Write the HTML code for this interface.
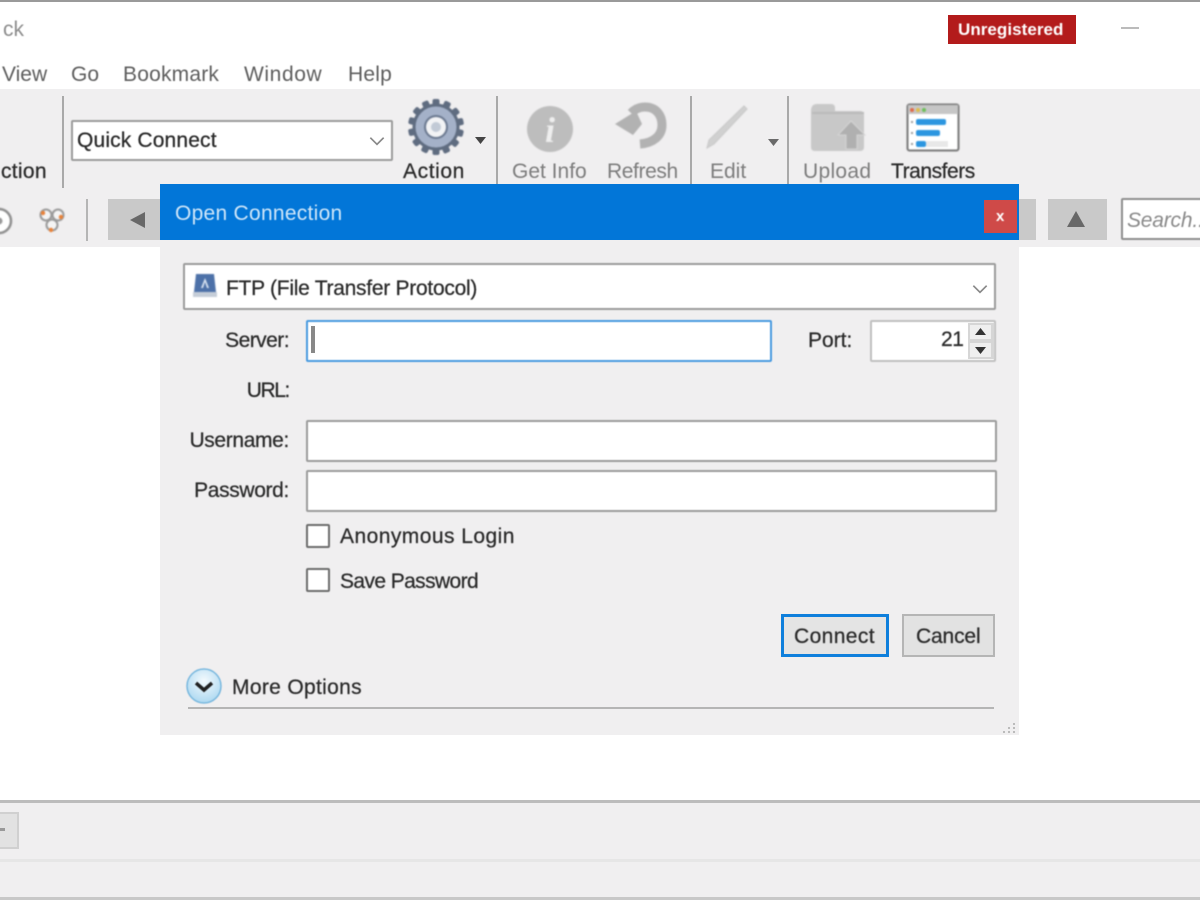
<!DOCTYPE html>
<html><head><meta charset="utf-8"><title>Open Connection</title>
<style>
html,body{margin:0;padding:0;background:#fff}
#r{position:relative;width:1200px;height:900px;overflow:hidden;background:#fff;font-family:"Liberation Sans",sans-serif;color:#3a3a3a}
#r div{position:absolute;box-sizing:border-box}
.t{white-space:nowrap;font-size:21px;line-height:26px;height:26px;margin-top:1px;filter:blur(.55px)}
.m{color:#5e5e5e}
.d{color:#7d7d7d}
.k{color:#2a2a2a;-webkit-text-stroke:.25px #2a2a2a}
.f{background:#fff;border:2px solid #9c9c9c;border-radius:2px;filter:blur(.4px)}
.s{width:2px;background:#a9a9a9}
.b{background:#c9c9c9}
svg{position:absolute;overflow:visible}
</style></head><body><div id="r">
<div style="left:0;top:0;width:1200px;height:2px;background:#9a9a9a"></div>
<div class="t d" style="left:3px;top:16px;color:#8d8d8d">ck</div>
<div style="left:948px;top:15px;width:128px;height:29px;background:#b31b1b"></div>
<div class="t" style="left:958px;top:16px;color:#fff;font-size:17px;font-weight:bold;letter-spacing:.05px">Unregistered</div>
<div style="left:1121px;top:27px;width:18px;height:2px;background:#bbb"></div>
<div class="t m" style="left:2px;top:61px;">View</div>
<div class="t m" style="left:71px;top:61px;">Go</div>
<div class="t m" style="left:123px;top:61px;letter-spacing:.2px">Bookmark</div>
<div class="t m" style="left:244px;top:61px;letter-spacing:.6px">Window</div>
<div class="t m" style="left:348px;top:61px;letter-spacing:.2px">Help</div>

<div style="left:0;top:89px;width:1200px;height:158px;background:#f0eff0"></div>
<div class="s" style="left:62px;top:96px;height:92px"></div>
<div class="s" style="left:496px;top:96px;height:88px"></div>
<div class="s" style="left:690px;top:96px;height:88px"></div>
<div class="s" style="left:787px;top:96px;height:88px"></div>
<div class="s" style="left:86px;top:199px;height:42px;background:#b5b5b5"></div>
<div class="t k" style="left:1px;top:158px;letter-spacing:.3px">ction</div>
<div class="f" style="left:71px;top:120px;width:322px;height:41px"></div>
<div class="t k" style="left:77px;top:127px;letter-spacing:.15px">Quick Connect</div>
<svg style="left:369px;top:136px" width="16" height="10" viewBox="0 0 18 12"><path d="M1 2l8 8 8-8" fill="none" stroke="#888" stroke-width="2"/></svg>
<svg style="left:406px;top:97px;filter:blur(.9px)" width="60" height="60" viewBox="0 0 60 60"><g fill="#5f6c80"><circle cx="30" cy="30" r="23.500"/><g id="tt"><rect x="26.500" y="2" width="7" height="8" rx="2"/><rect x="26.500" y="50" width="7" height="8" rx="2"/></g><use href="#tt" transform="rotate(26 30 30)"/><use href="#tt" transform="rotate(52 30 30)"/><use href="#tt" transform="rotate(78 30 30)"/><use href="#tt" transform="rotate(104 30 30)"/><use href="#tt" transform="rotate(130 30 30)"/><use href="#tt" transform="rotate(156 30 30)"/></g><circle cx="30" cy="30" r="20.500" fill="#a4b1c8"/><circle cx="30" cy="30" r="12" fill="#69778e"/><circle cx="30" cy="30" r="10" fill="#f2f3f5"/><circle cx="30" cy="30" r="5" fill="#c2cad6"/></svg>
<svg style="left:475px;top:137px" width="11" height="7" viewBox="0 0 11 7"><path d="M0 0h11L5.500 7z" fill="#444"/></svg>
<div class="t k" style="left:403px;top:158px;letter-spacing:.6px">Action</div>

<svg style="left:525px;top:104px;filter:blur(.8px)" width="50" height="50" viewBox="0 0 50 50"><circle cx="25" cy="25" r="23" fill="#bdbdbd"/><text x="25" y="38" text-anchor="middle" font-family="Liberation Serif" font-style="italic" font-weight="bold" font-size="36" fill="#eee">i</text></svg>
<div class="t d" style="left:512px;top:158px">Get Info</div>
<svg style="left:612px;top:100px;filter:blur(.9px)" width="58" height="52" viewBox="0 0 58 52"><path d="M19 13C23 9 27 7 33 7 44 7 50 15 50 25 50 36 41 43 28 44" fill="none" stroke="#b2b2b2" stroke-width="9"/><path d="M3 24L24 11 30 24 21 35z" fill="#b2b2b2"/></svg>
<div class="t d" style="left:607px;top:158px;letter-spacing:-.4px">Refresh</div>
<svg style="left:704px;top:104px;filter:blur(.9px)" width="48" height="48" viewBox="0 0 48 48"><path d="M3 44L5 36 40 2 43 5 10 40z" fill="#d0d0d0" stroke="#c8c8c8"/></svg>
<svg style="left:768px;top:139px" width="11" height="7" viewBox="0 0 11 7"><path d="M0 0h11L5.500 7z" fill="#6a6a6a"/></svg>
<div class="t d" style="left:710px;top:158px">Edit</div>
<svg style="left:808px;top:101px;filter:blur(.9px)" width="58" height="54" viewBox="0 0 58 54"><path d="M3 10q0-7 6-7h14q4 0 4 4v3h25q4 0 4 4v32q0 4-4 4H7q-4 0-4-4z" fill="#c8c8c8"/><path d="M4 12h52" stroke="#bbb" stroke-width="2"/><path d="M43 20L30 34h8v14h11V34h8z" fill="#b0b0b0" stroke="#d5d5d5"/></svg>
<div class="t d" style="left:803px;top:158px;letter-spacing:.3px">Upload</div>
<svg style="left:906px;top:103px;filter:blur(.7px)" width="54" height="50" viewBox="0 0 54 50"><rect x="1.500" y="1.500" width="51" height="46" rx="2" fill="#fff" stroke="#777" stroke-width="2"/><rect x="2" y="2" width="50" height="9" fill="#c6c6c6"/><circle cx="6" cy="7" r="2" fill="#e06a4a"/><circle cx="12" cy="7" r="2" fill="#e0bd4a"/><circle cx="18" cy="7" r="2" fill="#6dc05a"/><rect x="10" y="16" width="30" height="6" rx="2" fill="#2c96e0"/><rect x="10" y="27" width="24" height="6" rx="2" fill="#2c96e0"/><rect x="10" y="38" width="10" height="6" rx="2" fill="#2c96e0"/><path d="M5 19h2M5 30h2M5 41h2" stroke="#999" stroke-width="2"/><rect x="20" y="38" width="22" height="6" fill="#e8e8e8"/></svg>
<div class="t k" style="left:891px;top:158px;letter-spacing:-.45px">Transfers</div>

<svg style="left:-16px;top:206px;filter:blur(.7px)" width="30" height="30" viewBox="0 0 30 30"><circle cx="15" cy="15" r="12" fill="#fff" stroke="#8e8e8e" stroke-width="2.500"/><circle cx="15" cy="15" r="3.500" fill="#999"/></svg>
<svg style="left:37px;top:205px;filter:blur(.7px)" width="30" height="30" viewBox="0 0 30 30"><g fill="#f4f4f4" stroke="#999" stroke-width="2"><circle cx="9" cy="10" r="5.500"/><circle cx="21" cy="10" r="5.500"/><circle cx="15" cy="20" r="5.500"/></g><circle cx="6" cy="8" r="2.200" fill="#e8823a"/><circle cx="24" cy="12" r="2.200" fill="#e8823a"/><circle cx="14" cy="25" r="2.200" fill="#e8823a"/></svg>
<div class="b" style="left:108px;top:199px;width:55px;height:41px"></div>
<svg style="left:130px;top:212px" width="16" height="16" viewBox="0 0 16 16"><path d="M15 0v16L0 8z" fill="#686868"/></svg>
<div class="b" style="left:1015px;top:199px;width:21px;height:41px"></div>
<div class="b" style="left:1048px;top:199px;width:59px;height:41px"></div>
<svg style="left:1067px;top:211px" width="18" height="16" viewBox="0 0 18 16"><path d="M0 16h18L9 0z" fill="#686868"/></svg>
<div class="f" style="left:1121px;top:198px;width:90px;height:42px;border-color:#8f8f8f"></div>
<div class="t" style="left:1127px;top:207px;font-style:italic;color:#8a8a8a;letter-spacing:-.2px">Search...</div>

<div style="left:160px;top:240px;width:859px;height:495px;background:#f0eff0"></div>
<div style="left:160px;top:184px;width:859px;height:56px;background:#0276d8"></div>
<div class="t" style="left:175px;top:200px;color:#cfe6f9;letter-spacing:.27px">Open Connection</div>
<div style="left:984px;top:200px;width:33px;height:33px;background:#cf4a48"></div>
<div class="t" style="left:996px;top:203px;color:#fff;font-size:15px;font-weight:bold">x</div>

<div class="f" style="left:183px;top:263px;width:813px;height:47px"></div>
<svg style="left:192px;top:273px;filter:blur(.7px)" width="26" height="26" viewBox="0 0 26 26"><path d="M4 1h18l2 18H2z" fill="#4d71a8"/><rect x="1" y="19" width="24" height="5" fill="#c5cdd8"/><path d="M13 5l-4 10h2l2-6 2 6h2z" fill="#dce6f3"/></svg>
<div class="t k" style="left:226px;top:275px;letter-spacing:-.27px">FTP (File Transfer Protocol)</div>
<svg style="left:972px;top:284px" width="16" height="10" viewBox="0 0 18 12"><path d="M1 2l8 8 8-8" fill="none" stroke="#888" stroke-width="2"/></svg>

<div class="t k" style="right:911px;top:327px;letter-spacing:-.55px">Server:</div>
<div class="f" style="left:306px;top:320px;width:466px;height:42px;border-color:#4a9be0"></div>
<div style="left:311px;top:326px;width:4px;height:27px;background:#888"></div>
<div class="t k" style="left:808px;top:327px">Port:</div>
<div class="f" style="left:870px;top:320px;width:126px;height:42px;border-color:#c0c0c0"></div>
<div class="t k" style="left:941px;top:326px;letter-spacing:-.4px">21</div>
<div style="left:968px;top:323px;width:26px;height:36px;background:#d6d6d6"></div>
<div style="left:970px;top:325px;width:21px;height:14px;background:#efefef"></div>
<div style="left:970px;top:343px;width:21px;height:14px;background:#efefef"></div>
<svg style="left:975px;top:328px" width="11" height="26" viewBox="0 0 11 26"><path d="M0 7h11L5.500 0zM0 19h11L5.500 26z" fill="#333"/></svg>

<div class="t k" style="right:911px;top:377px;letter-spacing:-1.4px">URL:</div>
<div class="t k" style="right:911px;top:427px;letter-spacing:-.35px">Username:</div>
<div class="f" style="left:306px;top:420px;width:691px;height:42px"></div>
<div class="t k" style="right:911px;top:477px;letter-spacing:-.35px">Password:</div>
<div class="f" style="left:306px;top:470px;width:691px;height:42px"></div>

<div class="f" style="left:306px;top:524px;width:24px;height:24px;border-color:#6d6d6d"></div>
<div class="t k" style="left:340px;top:523px;letter-spacing:.45px">Anonymous Login</div>
<div class="f" style="left:306px;top:568px;width:24px;height:24px;border-color:#6d6d6d"></div>
<div class="t k" style="left:340px;top:568px;letter-spacing:-.6px">Save Password</div>

<div style="left:781px;top:614px;width:108px;height:43px;background:#e4e4e4;border:3px solid #0e7fdc"></div>
<div class="t k" style="left:794px;top:623px;letter-spacing:.4px">Connect</div>
<div style="left:902px;top:614px;width:93px;height:43px;background:#e2e2e2;border:2px solid #b5b5b5"></div>
<div class="t k" style="left:916px;top:623px;letter-spacing:-.15px">Cancel</div>

<svg style="left:186px;top:668px;filter:blur(.6px)" width="36" height="36" viewBox="0 0 36 36"><defs><radialGradient id="g" cx=".5" cy=".35" r=".7"><stop offset="0" stop-color="#f4fafd"/><stop offset="1" stop-color="#a8d6f0"/></radialGradient></defs><circle cx="18" cy="18" r="17" fill="url(#g)" stroke="#7ab8de" stroke-width="1.500"/><path d="M10 15l8 7 8-7" fill="none" stroke="#222" stroke-width="3.500"/></svg>
<div class="t k" style="left:232px;top:674px;letter-spacing:.33px">More Options</div>
<div style="left:188px;top:707px;width:806px;height:2px;background:#b5b5b5"></div>
<svg style="left:1001px;top:722px" width="16" height="11" viewBox="0 0 16 11"><path d="M12 1h2v2h-2zM7 5h2v2H7zM12 5h2v2h-2zM2 9h2v2H2zM7 9h2v2H7zM12 9h2v2h-2z" fill="#bbb"/></svg>

<div style="left:0;top:800px;width:1200px;height:100px;background:#f0eff0"></div>
<div style="left:0;top:800px;width:1200px;height:3px;background:#bcbcbc"></div>
<div style="left:-10px;top:812px;width:29px;height:37px;background:#e2e2e2;border:2px solid #d0d0d0"></div>
<div style="left:0;top:828px;width:5px;height:3px;background:#999"></div>
<div style="left:0;top:859px;width:1200px;height:3px;background:#e6e6e6"></div>
<div style="left:0;top:897px;width:1200px;height:3px;background:#c8c8c8"></div>
</div></body></html>
